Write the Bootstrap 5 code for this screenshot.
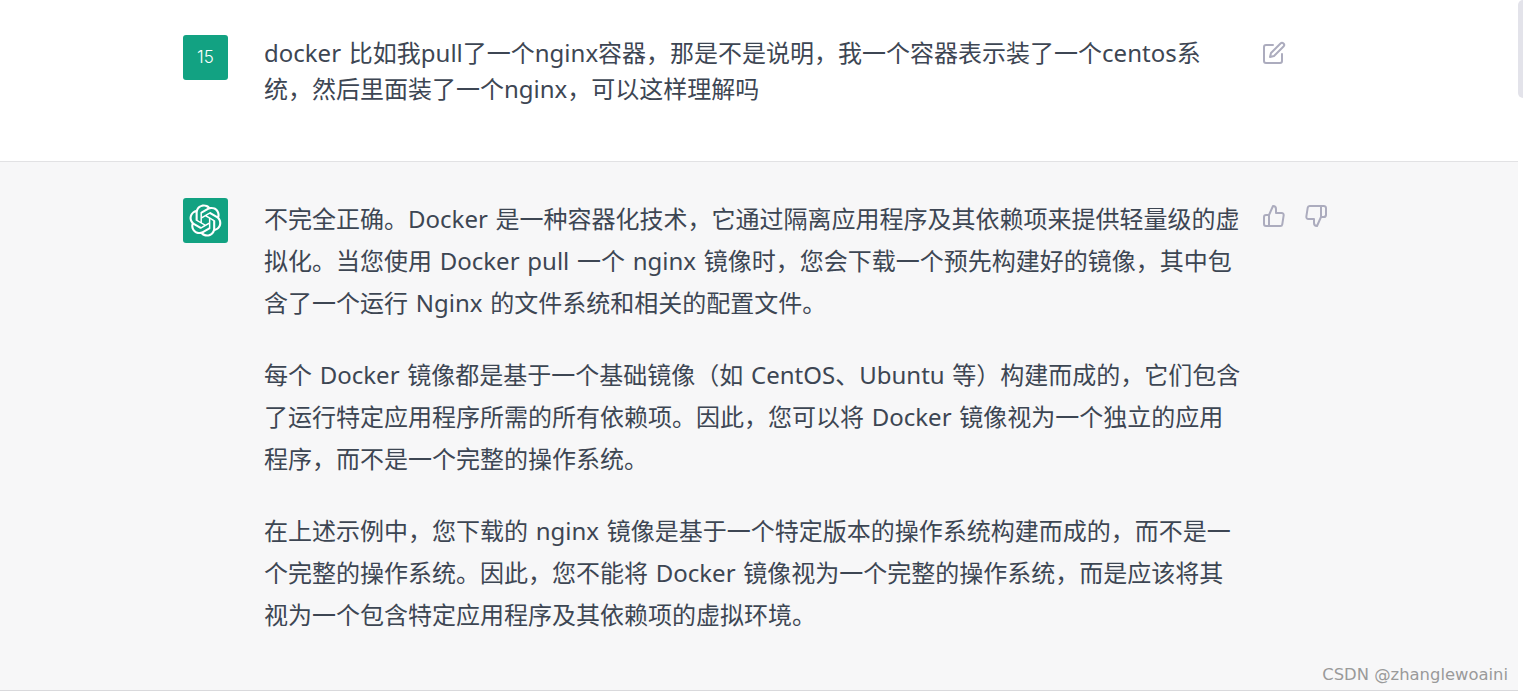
<!DOCTYPE html>
<html lang="zh-CN">
<head>
  <meta charset="UTF-8" />
  <meta name="viewport" content="width=device-width, initial-scale=1" />
  <title>ChatGPT</title>
  <link href="https://cdn.jsdelivr.net/npm/bootstrap@5.3.0/dist/css/bootstrap.min.css" rel="stylesheet" />
  <style>
    body {
      background-color: #fff;
      color: #3d4653;
      font-family: "Noto Sans", "Noto Sans CJK SC", sans-serif;
      overflow: hidden;
    }
    .chat-main {
      width: 1518px;
    }
    .scroll-track {
      width: 5px;
    }
    .scroll-thumb {
      height: 98px;
      background-color: #e3e3ea;
      border-radius: 5px 0 0 5px;
    }
    .msg-user {
      height: 162px;
      padding: 35px 0 0 183px;
      border-bottom: 1px solid #e2e2e4;
    }
    .msg-bot {
      height: 529px;
      padding: 36px 0 0 183px;
      background-color: #f7f7f8;
      border-bottom: 1px solid #d9d9dc;
    }
    .avatar {
      width: 45px;
      height: 45px;
      border-radius: 3px;
      background-color: #12a282;
      color: #fff;
      font-family: Inter, sans-serif;
      font-size: 17px;
      font-weight: 300;
    }
    .msg-text {
      width: 998px;
      margin-left: 36px;
      font-size: 24px;
      word-spacing: 1.5px;
      white-space: nowrap;
    }
    .msg-user .msg-text {
      line-height: 36px;
    }
    .msg-bot .msg-text {
      line-height: 42px;
    }
    .msg-bot p {
      margin-bottom: 30px;
    }
    .tool-icon {
      width: 24px;
      height: 24px;
      fill: none;
      stroke: #acacbe;
      stroke-width: 2;
      stroke-linecap: round;
      stroke-linejoin: round;
    }
    .msg-tools {
      gap: 18px;
      padding-top: 6px;
    }
    .watermark {
      position: absolute;
      right: 15px;
      top: 663px;
      font-family: "DejaVu Sans", sans-serif;
      font-size: 16.4px;
      color: #9a9a9a;
      white-space: nowrap;
    }
  </style>
</head>
<body>
  <div class="d-flex position-relative">
    <div class="chat-main">
      <div class="msg-user d-flex">
        <div class="avatar d-flex align-items-center justify-content-center flex-shrink-0">15</div>
        <div class="msg-text">docker 比如我pull了一个nginx容器，那是不是说明，我一个容器表示装了一个centos系<br>统，然后里面装了一个nginx，可以这样理解吗</div>
        <div class="msg-tools d-flex">
          <svg class="tool-icon" viewBox="0 0 24 24"><path d="M11 4H4a2 2 0 0 0-2 2v14a2 2 0 0 0 2 2h14a2 2 0 0 0 2-2v-7"/><path d="M18.5 2.5a2.121 2.121 0 0 1 3 3L12 15l-4 1 1-4 9.5-9.5z"/></svg>
        </div>
      </div>
      <div class="msg-bot d-flex">
        <div class="avatar d-flex align-items-center justify-content-center flex-shrink-0">
          <svg width="33" height="33" viewBox="0 0 41 41" fill="#fff"><path d="M37.5324 16.8707C37.9808 15.5241 38.1363 14.0974 37.9886 12.6859C37.8409 11.2744 37.3934 9.91076 36.676 8.68622C35.6126 6.83404 33.9882 5.3676 32.0373 4.4985C30.0864 3.62941 27.9098 3.40259 25.8215 3.85078C24.8796 2.7893 23.7219 1.94125 22.4257 1.36341C21.1295 0.785575 19.7249 0.491269 18.3058 0.500197C16.1708 0.495044 14.0893 1.16803 12.3614 2.42214C10.6335 3.67624 9.34853 5.44666 8.6917 7.47815C7.30085 7.76286 5.98686 8.3414 4.8377 9.17505C3.68854 10.0087 2.73073 11.0782 2.02839 12.312C0.956464 14.1591 0.498905 16.2988 0.721698 18.4228C0.944492 20.5467 1.83612 22.5449 3.268 24.1293C2.81966 25.4759 2.66413 26.9026 2.81182 28.3141C2.95951 29.7256 3.40701 31.0892 4.12437 32.3138C5.18791 34.1659 6.8123 35.6322 8.76321 36.5013C10.7141 37.3704 12.8907 37.5973 14.9789 37.1492C15.9208 38.2107 17.0786 39.0587 18.3747 39.6366C19.6709 40.2144 21.0755 40.5087 22.4946 40.4998C24.6307 40.5054 26.7133 39.8321 28.4418 38.5772C30.1704 37.3223 31.4556 35.5506 32.1119 33.5179C33.5027 33.2332 34.8167 32.6547 35.9659 31.821C37.115 30.9874 38.0728 29.9178 38.7752 28.684C39.8458 26.8371 40.3023 24.6979 40.0789 22.5748C39.8556 20.4517 38.9639 18.4544 37.5324 16.8707ZM22.4978 37.8849C20.7443 37.8874 19.0459 37.2733 17.6994 36.1501C17.7601 36.117 17.8666 36.0586 17.936 36.0161L25.9004 31.4156C26.1003 31.3019 26.2663 31.137 26.3813 30.9378C26.4964 30.7386 26.5563 30.5124 26.5549 30.2825V19.0542L29.9213 20.998C29.9389 21.0068 29.9541 21.0198 29.9656 21.0359C29.977 21.052 29.9842 21.0707 29.9867 21.0902V30.3889C29.9842 32.375 29.1946 34.2791 27.7909 35.6841C26.3872 37.0892 24.4838 37.8806 22.4978 37.8849ZM6.39227 31.0064C5.51397 29.4888 5.19742 27.7107 5.49804 25.9832C5.55718 26.0187 5.66048 26.0818 5.73461 26.1244L13.699 30.7248C13.8975 30.8408 14.1233 30.902 14.3532 30.902C14.583 30.902 14.8088 30.8408 15.0073 30.7248L24.731 25.1103V28.9979C24.7321 29.0177 24.7283 29.0376 24.7199 29.0556C24.7115 29.0736 24.6988 29.0893 24.6829 29.1012L16.6317 33.7497C14.9096 34.7416 12.8643 35.0097 10.9447 34.4954C9.02506 33.9811 7.38785 32.7263 6.39227 31.0064ZM4.29707 13.6194C5.17156 12.0998 6.55279 10.9364 8.19885 10.3327C8.19885 10.4013 8.19491 10.5228 8.19491 10.6071V19.808C8.19351 20.0378 8.25334 20.2638 8.36823 20.4629C8.48312 20.6619 8.64893 20.8267 8.84863 20.9404L18.5723 26.5542L15.206 28.4979C15.1894 28.5089 15.1703 28.5155 15.1505 28.5173C15.1307 28.5191 15.1107 28.516 15.0924 28.5082L7.04046 23.8557C5.32135 22.8601 4.06716 21.2235 3.55289 19.3046C3.03862 17.3858 3.30624 15.3413 4.29707 13.6194ZM31.955 20.0556L22.2312 14.4411L25.5976 12.4981C25.6142 12.4872 25.6333 12.4805 25.6531 12.4787C25.6729 12.4769 25.6928 12.4801 25.7111 12.4879L33.7631 17.1364C34.9967 17.849 36.0017 18.8982 36.6606 20.1613C37.3194 21.4244 37.6047 22.849 37.4832 24.2684C37.3617 25.6878 36.8382 27.0432 35.9743 28.1759C35.1103 29.3086 33.9415 30.1717 32.6047 30.6641C32.6047 30.5947 32.6047 30.4733 32.6047 30.3889V21.188C32.6066 20.9586 32.5474 20.7328 32.4332 20.5338C32.319 20.3348 32.154 20.1698 31.955 20.0556ZM35.3055 15.0128C35.2464 14.9765 35.1431 14.9142 35.069 14.8717L27.1045 10.2712C26.906 10.1554 26.6803 10.0943 26.4504 10.0943C26.2206 10.0943 25.9948 10.1554 25.7963 10.2712L16.0726 15.8858V11.9982C16.0715 11.9783 16.0753 11.9585 16.0837 11.9405C16.0921 11.9225 16.1048 11.9068 16.1207 11.8949L24.1719 7.25025C25.4053 6.53903 26.8158 6.19376 28.2383 6.25482C29.6608 6.31589 31.0364 6.78077 32.2044 7.59508C33.3723 8.40939 34.2842 9.53945 34.8334 10.8531C35.3826 12.1667 35.5464 13.6095 35.3055 15.0128ZM14.2424 21.9419L10.8752 19.9981C10.8576 19.9893 10.8423 19.9763 10.8309 19.9602C10.8195 19.9441 10.8122 19.9254 10.8098 19.9058V10.6071C10.8107 9.18295 11.2173 7.78848 11.9819 6.58696C12.7466 5.38544 13.8377 4.42659 15.1275 3.82264C16.4173 3.21869 17.8524 2.99464 19.2649 3.1767C20.6775 3.35876 22.0089 3.93941 23.1034 4.85067C23.0427 4.88379 22.937 4.94215 22.8668 4.98473L14.9024 9.58517C14.7025 9.69878 14.5366 9.86356 14.4215 10.0626C14.3065 10.2616 14.2466 10.4877 14.2479 10.7175L14.2424 21.9419ZM16.071 17.9991L20.4018 15.4978L24.7325 17.9975V22.9985L20.4018 25.4983L16.071 22.9985V17.9991Z"/></svg>
        </div>
        <div class="msg-text">
          <p>不完全正确。Docker 是一种容器化技术，它通过隔离应用程序及其依赖项来提供轻量级的虚<br>拟化。当您使用 Docker pull 一个 nginx 镜像时，您会下载一个预先构建好的镜像，其中包<br>含了一个运行 Nginx 的文件系统和相关的配置文件。</p>
          <p>每个 Docker 镜像都是基于一个基础镜像（如 CentOS、Ubuntu 等）构建而成的，它们包含<br>了运行特定应用程序所需的所有依赖项。因此，您可以将 Docker 镜像视为一个独立的应用<br>程序，而不是一个完整的操作系统。</p>
          <p>在上述示例中，您下载的 nginx 镜像是基于一个特定版本的操作系统构建而成的，而不是一<br>个完整的操作系统。因此，您不能将 Docker 镜像视为一个完整的操作系统，而是应该将其<br>视为一个包含特定应用程序及其依赖项的虚拟环境。</p>
        </div>
        <div class="msg-tools d-flex align-items-start">
          <svg class="tool-icon" viewBox="0 0 24 24"><path d="M14 9V5a3 3 0 0 0-3-3l-4 9v11h11.28a2 2 0 0 0 2-1.7l1.38-9a2 2 0 0 0-2-2.3zM7 22H4a2 2 0 0 1-2-2v-7a2 2 0 0 1 2-2h3"/></svg>
          <svg class="tool-icon" viewBox="0 0 24 24"><path d="M10 15v4a3 3 0 0 0 3 3l4-9V2H5.72a2 2 0 0 0-2 1.7l-1.38 9a2 2 0 0 0 2 2.3zm7-13h2.67A2.31 2.31 0 0 1 22 4v7a2.31 2.31 0 0 1-2.33 2H17"/></svg>
        </div>
      </div>
    </div>
    <div class="scroll-track">
      <div class="scroll-thumb"></div>
    </div>
    <div class="watermark">CSDN @zhanglewoaini</div>
  </div>
  <script src="https://cdn.jsdelivr.net/npm/bootstrap@5.3.0/dist/js/bootstrap.bundle.min.js"></script>
</body>
</html>
